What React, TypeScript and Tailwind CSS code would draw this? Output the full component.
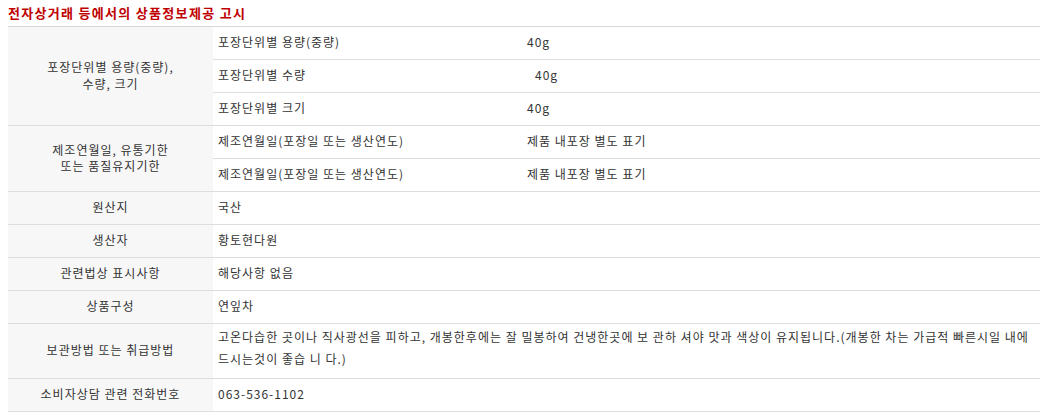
import React from "react";

const font = { fontFamily: '"Noto Sans CJK KR", "Noto Sans", sans-serif' };

function SubRow({ label, value, last, valuePad }: { label: string; value: string; last?: boolean; valuePad?: string }) {
  return (
    <div className={`flex items-center pb-[2px] ${last ? "h-[32px]" : "h-[33px] border-b border-[#dddddd]"}`}>
      <div className="w-[309px] pl-[5px]">{label}</div>
      <div className={valuePad ?? "pl-[5px]"}>{value}</div>
    </div>
  );
}

function Row({ label, children, h = "h-[33px]" }: { label: React.ReactNode; children: React.ReactNode; h?: string }) {
  return (
    <div className={`flex border-b border-[#dddddd] ${h}`}>
      <div className="w-[205px] shrink-0 bg-[#f7f7f7] flex items-center justify-center text-center pb-[2px]">
        {label}
      </div>
      <div className="flex-1 flex items-center pl-[5px] pb-[2px]">{children}</div>
    </div>
  );
}

export default function App() {
  return (
    <div className="w-[1040px] h-[419px] bg-white text-[12px] tracking-[1px] text-[#333333]" style={font}>
      <div className="h-[26px] pl-2 pt-[4px] text-[13px] font-bold tracking-[1.3px] text-[#c00000] leading-[18px]">
        전자상거래 등에서의 상품정보제공 고시
      </div>
      <div className="ml-2 border-t border-[#d8d8d2]">
        <div className="flex border-b border-[#dddddd]">
          <div className="w-[205px] shrink-0 bg-[#f7f7f7] flex items-center justify-center text-center leading-[17px] pb-[3px]">
            포장단위별 용량(중량),
            <br />
            수량, 크기
          </div>
          <div className="flex-1 flex flex-col">
            <SubRow label="포장단위별 용량(중량)" value="40g" />
            <SubRow label="포장단위별 수량" value="40g" valuePad="pl-[13px]" />
            <SubRow label="포장단위별 크기" value="40g" last />
          </div>
        </div>
        <div className="flex border-b border-[#dddddd]">
          <div className="w-[205px] shrink-0 bg-[#f7f7f7] flex items-center justify-center text-center leading-[16px] pb-[2px]">
            제조연월일, 유통기한
            <br />
            또는 품질유지기한
          </div>
          <div className="flex-1 flex flex-col">
            <SubRow label="제조연월일(포장일 또는 생산연도)" value="제품 내포장 별도 표기" />
            <SubRow label="제조연월일(포장일 또는 생산연도)" value="제품 내포장 별도 표기" last />
          </div>
        </div>
        <Row label="원산지">국산</Row>
        <Row label="생산자">황토현다원</Row>
        <Row label="관련법상 표시사항">해당사항 없음</Row>
        <Row label="상품구성">연잎차</Row>
        <div className="flex border-b border-[#dddddd] h-[55px]">
          <div className="w-[205px] shrink-0 bg-[#f7f7f7] flex items-center justify-center text-center pb-[2px]">
            보관방법 또는 취급방법
          </div>
          <div className="flex-1 pl-[5px] pr-1 pt-[2px] leading-[22px]">
            고온다습한 곳이나 직사광선을 피하고, 개봉한후에는 잘 밀봉하여 건냉한곳에 보 관하 셔야 맛과 색상이 유지됩니다.(개봉한 차는 가급적 빠른시일 내에 드시는것이 좋습 니 다.)
          </div>
        </div>
        <Row label="소비자상담 관련 전화번호">063-536-1102</Row>
      </div>
    </div>
  );
}
